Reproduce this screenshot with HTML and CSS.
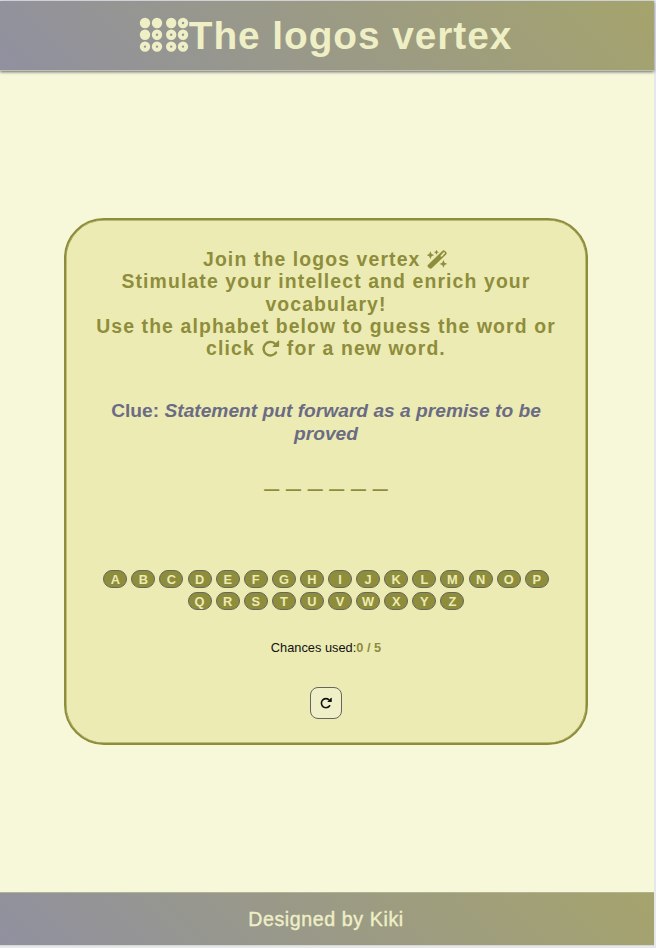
FILE: index.html
```html
<!DOCTYPE html>
<html lang="en">
<head>
<meta charset="utf-8">
<title>The logos vertex</title>
<link rel="stylesheet" href="styles.css">
</head>
<body>
<svg class="defs" aria-hidden="true">
  <symbol id="reload" viewBox="0 0 18 17"><path d="M14.5 12.6A6.8 6.8 0 1 1 13.4 3.6" fill="none" stroke="currentColor" stroke-width="2.4" stroke-linecap="round"/><path d="M16.6 .8Q17.6.2 17.6 1.3V6.2Q17.6 7 16.8 7H11.7Q10.6 7 11.4 6.1Z" fill="currentColor"/></symbol>
</svg>
<div class="app">
  <header class="header">
    <svg class="logo" viewBox="0 0 50 36" fill="none" stroke="currentColor">
      <g fill="currentColor" stroke="none"><circle cx="6" cy="6" r="5.2"/><circle cx="18" cy="6" r="5.2"/><circle cx="32.2" cy="6" r="5.2"/><circle cx="6" cy="17.8" r="5.2"/></g>
      <g stroke-width="4"><circle cx="44" cy="6" r="3.2"/><circle cx="18" cy="17.8" r="3.2"/><circle cx="32.2" cy="17.8" r="3.2"/><circle cx="44" cy="17.8" r="3.2"/><circle cx="6" cy="29.6" r="3.2"/><circle cx="18" cy="29.6" r="3.2"/><circle cx="32.2" cy="29.6" r="3.2"/><circle cx="44" cy="29.6" r="3.2"/></g>
    </svg>
    <h1>The logos vertex</h1>
  </header>
  <main class="main">
    <section class="card">
      <p class="intro">Join the logos vertex <svg class="wand" viewBox="0 0 20 19" fill="currentColor"><path fill-rule="evenodd" d="M1.1 14.8 15.3.9Q16.6-.2 18 .9L19.1 2Q20.2 3.2 19.1 4.6L5 18.1Q3.6 19.2 2.2 18.1L1.1 17.2Q-.1 16 1.1 14.8ZM13.3 5.9 14.5 7 17.8 3.6Q18.2 2.9 17.6 2.3 16.9 1.9 16.3 2.5Z"/><path d="m3.4 1.3 1.2 2.6 2.6 1.2-2.6 1.2-1.2 2.6-1.2-2.6L-.2 5.1l2.4-1.2ZM9.4-.2l.9 1.6 1.6.9-1.6.8-.9 1.6-.8-1.6-1.6-.8 1.6-.9ZM16.4 10l1.2 2.7 2.6 1.2-2.6 1.2-1.2 2.6-1.2-2.6-2.6-1.2 2.6-1.2Z"/></svg><br>Stimulate your intellect and enrich your<br>vocabulary!<br>Use the alphabet below to guess the word or<br>click <svg class="reload-inline"><use href="#reload"/></svg> for a new word.</p>
      <p class="clue">Clue: <em>Statement put forward as a premise to be<br>proved</em></p>
      <p class="word">_ _ _ _ _ _</p>
      <div class="keys">
        <button>A</button><button>B</button><button>C</button><button>D</button><button>E</button><button>F</button><button>G</button><button>H</button><button>I</button><button>J</button><button>K</button><button>L</button><button>M</button><button>N</button><button>O</button><button>P</button><button>Q</button><button>R</button><button>S</button><button>T</button><button>U</button><button>V</button><button>W</button><button>X</button><button>Y</button><button>Z</button>
      </div>
      <p class="chances">Chances used:<b>0 / 5</b></p>
      <button class="again" aria-label="New word"><svg viewBox="0 0 18 17"><use href="#reload" width="18" height="17"/></svg></button>
    </section>
  </main>
  <footer class="footer">Designed by Kiki</footer>
</div>
</body>
</html>
```
FILE: styles.css
```css
* { box-sizing: border-box; margin: 0; padding: 0; }
body { background: #e6e7eb; font-family: "Liberation Sans", Arial, sans-serif; }
.defs { display: none; }
.app { width: 654px; height: 948px; padding-top: 1px; display: flex; flex-direction: column; }
.header, .footer {
  flex: none;
  display: flex;
  align-items: center;
  justify-content: center;
  color: #efefc6;
  background: linear-gradient(45deg, #9090a0, #a5a46c);
}
.header { height: 70px; border-bottom: 1px solid #c3c29c; box-shadow: 0 1px 3px #66667d; position: relative; padding-right: 3px; }
.logo { width: 50px; height: 36px; margin-top: -1px; }
h1 { font-size: 38.8px; line-height: 44px; letter-spacing: .95px; margin-top: 1px; }
.main { flex: 1; background: #f7f8da; padding: 147px 0 0 64px; }
.card {
  width: 524px;
  height: 527px;
  border: 2px solid #8e8d3c;
  box-shadow: inset 0 0 0 .5px #8e8d3c;
  border-radius: 40px;
  background: #ecebb3;
  padding-top: 28px;
  display: flex;
  flex-direction: column;
  align-items: center;
  text-align: center;
  color: #8e8d3c;
}
.intro, .clue { font-size: 19.2px; line-height: 22.3px; font-weight: bold; white-space: nowrap; }
.intro { font-size: 19.4px; letter-spacing: 1.12px; }
.wand { width: 20px; height: 19px; vertical-align: -3px; margin-right: 2px; }
.reload-inline { width: 19px; height: 17px; vertical-align: -2px; }
.clue { color: #6b6b83; margin-top: 41px; }
.word { font-size: 26px; line-height: 30px; margin-top: 17px; }
.keys { width: 470px; margin-top: 78px; display: flex; flex-wrap: wrap; justify-content: center; gap: 4px 4.1px; }
.keys button {
  width: 24px;
  height: 18px;
  border: 1px solid #67675c;
  border-radius: 9px;
  background: #8e8d3c;
  color: #ecebb3;
  font: bold 12.8px/15px "Liberation Sans", Arial, sans-serif;
}
.chances { color: #111; font-size: 12.8px; line-height: 16px; margin-top: 30px; }
.chances b { color: #8e8d3c; }
.again {
  width: 32px;
  height: 32px;
  margin-top: 31px;
  border: 1px solid #66665e;
  border-radius: 8px;
  background: #efefc8;
  color: #111;
  display: flex;
  align-items: center;
  justify-content: center;
}
.again svg { width: 12px; height: 12px; }
.footer { height: 54px; border-top: 1px solid #b2b295; border-bottom: 1px solid #d7d8d2; font-size: 19.6px; margin-bottom: 2px; letter-spacing: .6px; padding-right: 2px; -webkit-text-stroke: .4px #efefc6; }
```
